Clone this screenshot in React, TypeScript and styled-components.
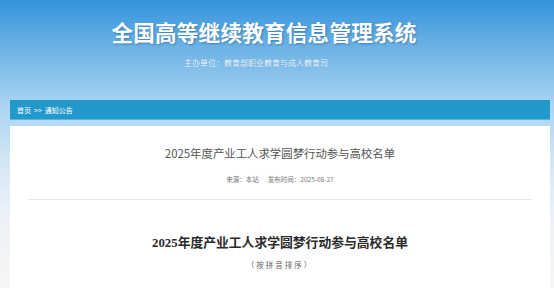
import React from 'react';
import styled, { createGlobalStyle } from 'styled-components';

const colors = {
  nav: '#2398cb',
  title: '#555555',
  meta: '#777777',
  heading: '#2b2b2b',
};

const GlobalStyle = createGlobalStyle`
  html, body {
    margin: 0;
    padding: 0;
  }
  body {
    font-family: "Noto Sans CJK SC", "Noto Sans", sans-serif;
    background: linear-gradient(
      to bottom,
      #3493dc 0px,
      #6fb4e6 50px,
      #a9d4f2 105px,
      #d3e6f5 160px,
      #edf2f8 220px,
      #f5f5f5 270px
    );
    min-height: 288px;
    overflow: hidden;
  }
`;

const Page = styled.div`
  width: 554px;
  display: flex;
  flex-direction: column;
`;

// header content sits a little left of the page centre
const Header = styled.header`
  height: 100px;
  display: flex;
  flex-direction: column;
  align-items: center;
  padding: 16px 26px 0 0;
  box-sizing: border-box;
`;

const SiteTitle = styled.h1`
  margin: 0;
  color: #fff;
  font-size: 21.6px;
  font-weight: 700;
  letter-spacing: 0.2px;
  line-height: 32px;
  text-shadow: 1px 1px 2px rgba(0, 40, 90, 0.35);
`;

const Sponsor = styled.p`
  margin: 9px 16px 0 0;
  color: #f2f8fd;
  font-size: 8px;
  line-height: 12px;
  text-shadow: 0 0 1px rgba(0, 60, 120, 0.3);
`;

const Main = styled.main`
  margin-left: 10px;
  width: 540px;
  display: flex;
  flex-direction: column;
`;

const Breadcrumb = styled.nav`
  height: 19px;
  background: ${colors.nav};
  border-bottom: 1px solid #5fb3dc;
  color: #fff;
  font-size: 7px;
  display: flex;
  align-items: center;
  padding-left: 7px;
  gap: 3px;
`;

const Card = styled.article`
  margin-top: 6px;
  background: #fff;
  height: 170px;
  padding: 0 18px;
  display: flex;
  flex-direction: column;
`;

const ArticleTitle = styled.h2`
  margin: 18px 0 0 0;
  text-align: center;
  color: ${colors.title};
  font-size: 11.4px;
  font-weight: 400;
  line-height: 18px;
`;

const Meta = styled.div`
  margin-top: 12px;
  text-align: center;
  color: ${colors.meta};
  font-size: 6.5px;
  line-height: 10px;
  display: flex;
  justify-content: center;
  gap: 9px;
`;

const Divider = styled.hr`
  margin: 15px 0 0 0;
  border: none;
  border-top: 1px solid #e6e6e6;
`;

const DocTitle = styled.h3`
  margin: 34px 0 0 0;
  text-align: center;
  color: ${colors.heading};
  font-family: "Liberation Serif", "Noto Sans CJK SC", serif;
  font-size: 12.8px;
  font-weight: 700;
  line-height: 18px;
`;

const DocNote = styled.p`
  margin: 7px 0 0 0;
  text-align: center;
  color: #666;
  font-size: 7.5px;
  letter-spacing: 2px;
  line-height: 12px;
`;

export default function App() {
  return (
    <Page>
      <GlobalStyle />
      <Header>
        <SiteTitle>全国高等继续教育信息管理系统</SiteTitle>
        <Sponsor>主办单位：教育部职业教育与成人教育司</Sponsor>
      </Header>
      <Main>
        <Breadcrumb>
          <span>首页</span>
          <span>&gt;&gt;</span>
          <span>通知公告</span>
        </Breadcrumb>
        <Card>
          <ArticleTitle>2025年度产业工人求学圆梦行动参与高校名单</ArticleTitle>
          <Meta>
            <span>来源：本站</span>
            <span>发布时间：2025-08-27</span>
          </Meta>
          <Divider />
          <DocTitle>2025年度产业工人求学圆梦行动参与高校名单</DocTitle>
          <DocNote>（按拼音排序）</DocNote>
        </Card>
      </Main>
    </Page>
  );
}
